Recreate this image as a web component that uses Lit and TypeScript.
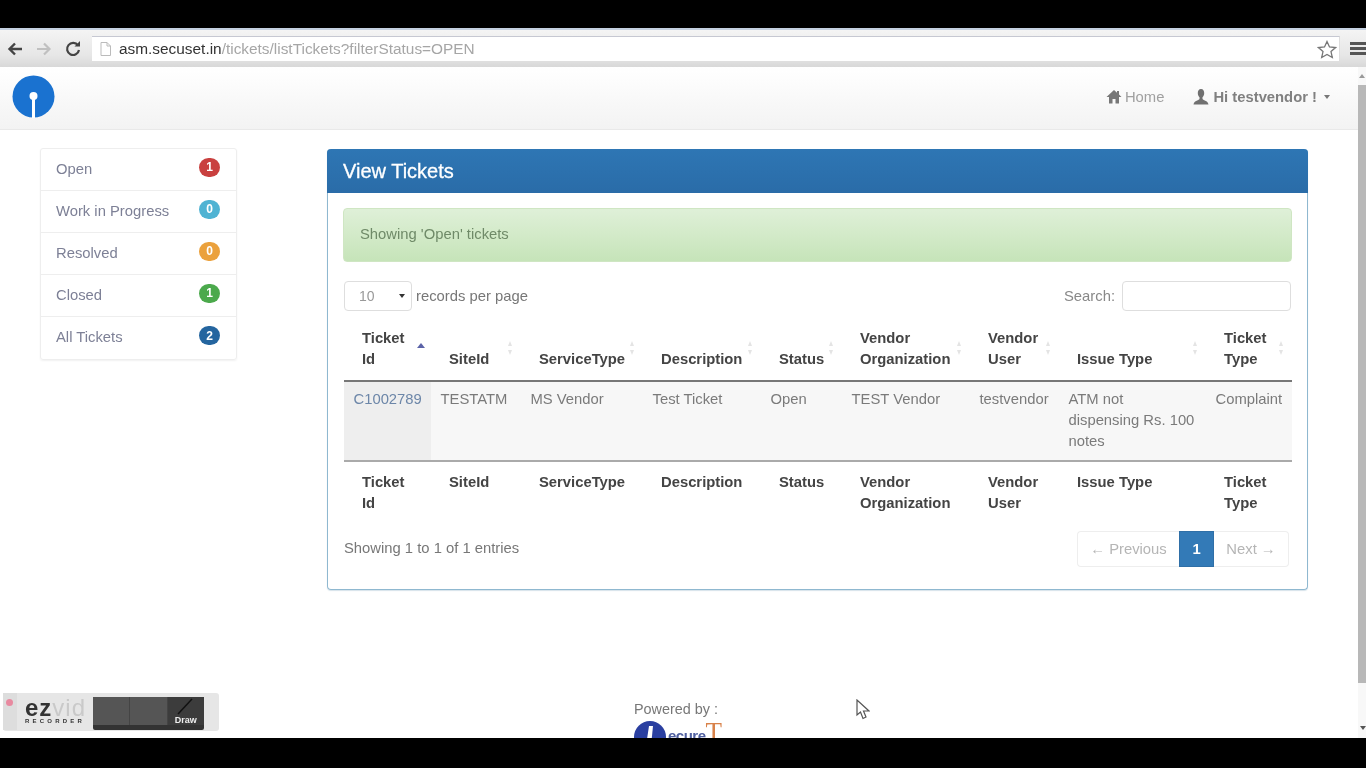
import { LitElement, css, html, svg } from 'lit';
import { customElement } from 'lit/decorators.js';

const sideItems = [
  { label: 'Open', count: 1, color: '#c9403f' },
  { label: 'Work in Progress', count: 0, color: '#4fb3d3' },
  { label: 'Resolved', count: 0, color: '#eba13c' },
  { label: 'Closed', count: 1, color: '#4ba94c' },
  { label: 'All Tickets', count: 2, color: '#24659f' },
];

const columns = [
  { width: 87, head: ['Ticket', 'Id'], sorted: true },
  { width: 90, head: ['SiteId'] },
  { width: 122, head: ['ServiceType'] },
  { width: 118, head: ['Description'] },
  { width: 81, head: ['Status'] },
  { width: 128, head: ['Vendor', 'Organization'] },
  { width: 89, head: ['Vendor', 'User'] },
  { width: 147, head: ['Issue Type'] },
  { width: 86, head: ['Ticket', 'Type'] },
];

const row = [
  ['TESTATM'],
  ['MS Vendor'],
  ['Test Ticket'],
  ['Open'],
  ['TEST Vendor'],
  ['testvendor'],
  ['ATM not', 'dispensing Rs. 100', 'notes'],
  ['Complaint'],
];

const sortIcon = (sorted: boolean) => html`
  <svg class="sort ${sorted ? 'on' : ''}" width="8" height="16" viewBox="0 0 8 16">
    ${sorted
      ? svg`<path d="M0 7 L4 2 L8 7 Z" fill="#5b63a8"/>`
      : svg`<path d="M2 6 L4 1 L6 6 Z M2 10 L4 15 L6 10 Z" fill="#e4e4e4"/>`}
  </svg>`;

@customElement('app-root')
export class AppRoot extends LitElement {
  static styles = css`
    :host {
      display: block;
      font-family: 'Liberation Sans', Arial, sans-serif;
      font-size: 14.8px;
      color: #666;
    }
    * { box-sizing: border-box; }
    .screen {
      position: relative;
      width: 1366px;
      height: 768px;
      background: #000;
      overflow: hidden;
      display: flex;
      flex-direction: column;
      padding-top: 28px;
      padding-bottom: 30px;
      filter: blur(0.6px);
    }
    .chrome {
      height: 39px;
      flex: none;
      display: flex;
      align-items: center;
      background: linear-gradient(#f4f4f4, #e6e6e6 70%, #d8d8d8);
      border-top: 2px solid #c4d0e0;
    }
    .nav-btn { width: 29px; height: 20px; flex: none; display: flex; align-items: center; justify-content: center; }
    .omni {
      margin-left: 5px;
      width: 1248px;
      height: 25px;
      background: #fff;
      border-top: 1px solid #c6c8d2;
      border-right: 1px solid #ddd;
      display: flex;
      align-items: center;
      padding: 0 2px 0 8px;
      font-size: 15.4px;
      color: #a6a6a6;
      gap: 8px;
      white-space: nowrap;
    }
    .omni b { font-weight: 400; color: #333; }
    .omni .star { margin-left: auto; }
    .menu { margin-left: 10px; width: 16px; flex: none; display: flex; flex-direction: column; gap: 2px; }
    .menu i { display: block; height: 3px; background: #555; }
    .page {
      flex: 1;
      min-height: 0;
      background: #fff;
      display: flex;
      flex-direction: column;
      margin-right: 8px;
      position: relative;
    }
    .navbar {
      height: 63px;
      flex: none;
      display: flex;
      align-items: center;
      padding: 0 28px 3px 12px;
      background: linear-gradient(#fff, #f3f3f3);
      border-bottom: 1px solid #e9e9e9;
    }
    .nav-links { margin-left: auto; display: flex; align-items: center; color: #a0a0a0; }
    .nav-home { display: flex; align-items: center; gap: 3px; margin-right: 29px; }
    .nav-user { display: flex; align-items: center; gap: 4px; font-weight: 700; color: #808080; }
    .caret { width: 0; height: 0; border: 3px solid transparent; border-top: 4px solid #777; border-bottom: 0; margin-left: 3px; }
    .main { flex: 1; min-height: 0; display: flex; align-items: flex-start; padding: 18px 0 0 40px; }
    .side {
      width: 197px;
      flex: none;
      margin-right: 90px;
      border: 1px solid #eee;
      border-radius: 3px;
      box-shadow: 0 1px 2px rgba(0, 0, 0, 0.06);
      color: #7d8096;
    }
    .side-item {
      height: 42px;
      display: flex;
      align-items: center;
      justify-content: space-between;
      padding: 0 16px 2px 15px;
      border-bottom: 1px solid #eee;
    }
    .side-item:last-child { border-bottom: 0; }
    .badge {
      width: 21px;
      height: 19px;
      border-radius: 10px;
      color: #fff;
      font-size: 12px;
      font-weight: 700;
      display: flex;
      align-items: center;
      justify-content: center;
      margin-top: -3px;
    }
    .panel {
      width: 981px;
      flex: none;
      margin-top: 1px;
      border: 1px solid #8fb8d0;
      border-top: 0;
      border-radius: 4px;
      box-shadow: 0 1px 1px rgba(90, 140, 170, 0.25);
    }
    .panel-head {
      height: 44px;
      margin: 0 -1px;
      padding-left: 16px;
      display: flex;
      align-items: center;
      background: linear-gradient(#2e76b4, #2a6ca8);
      color: #fff;
      font-size: 20px;
      font-weight: 400;
      -webkit-text-stroke: 0.3px #fff;
      border-radius: 4px 4px 0 0;
    }
    .panel-body { padding: 15px 15px 22px; }
    .alert {
      height: 54px;
      display: flex;
      align-items: center;
      padding: 0 16px 2px;
      background: linear-gradient(#dff0d8, #c6e4b9);
      border: 1px solid #cfe6c3;
      border-radius: 4px;
      color: #6f8a68;
    }
    .tools { display: flex; align-items: center; justify-content: space-between; margin: 19px 0 0 1px; height: 30px; }
    .length { display: flex; align-items: center; gap: 4px; color: #777; }
    .select {
      width: 68px;
      height: 30px;
      border: 1px solid #dedede;
      border-radius: 4px;
      padding: 0 6px 0 14px;
      display: flex;
      align-items: center;
      justify-content: space-between;
      font-size: 14px;
      color: #999;
    }
    .select i { width: 0; height: 0; border: 3px solid transparent; border-top: 4px solid #333; border-bottom: 0; }
    .search { display: flex; align-items: center; gap: 7px; color: #888; }
    .input { width: 169px; height: 30px; border: 1px solid #dedede; border-radius: 4px; margin-right: 1px; }
    table { width: 948px; table-layout: fixed; border-collapse: collapse; margin: 9px 0 0 1px; line-height: 21px; }
    th { position: relative; text-align: left; font-weight: 700; color: #444; vertical-align: bottom; padding: 8px 0 10px 18px; white-space: nowrap; }
    td { vertical-align: top; padding: 7px 0 8px 9.5px; color: #7a7a7a; background: #f7f7f7; white-space: nowrap; }
    td.first { background: #eeeeee; color: #6c86a8; }
    thead th { border-bottom: 2px solid #777; }
    tbody td { border-bottom: 2px solid #aaa; }
    tfoot th { vertical-align: top; padding: 10px 0 8px 18px; }
    .sort { position: absolute; right: 7px; top: 20px; }
    .sort.on { top: 21px; right: 6px; }
    .foot { display: flex; align-items: flex-start; justify-content: space-between; margin: 9px 0 0 1px; }
    .info { margin-top: 9px; color: #777; }
    .pager { display: flex; height: 36px; margin-right: 3px; color: #b5b5b5; }
    .pager span { display: flex; align-items: center; justify-content: center; border: 1px solid #eee; }
    .prev { width: 102px; border-radius: 4px 0 0 4px; border-right: 0 !important; }
    .cur { width: 35px; background: #337ab7; border-color: #2f6fa7 !important; color: #fff; font-weight: 700; }
    .next { width: 75px; border-radius: 0 4px 4px 0; border-left: 0 !important; }
    .powered { position: absolute; left: 634px; top: 633px; width: 110px; color: #777; font-size: 14.4px; line-height: 18px; }
    .logo2 { display: flex; align-items: flex-start; margin-top: 2px; height: 18px; overflow: hidden; }
    .logo2 em { font-style: normal; font-size: 15px; line-height: 32px; color: #5060a0; font-weight: 700; letter-spacing: -0.5px; white-space: nowrap; }
    .logo2 em u { text-decoration: none; color: #d8824a; font-family: 'Liberation Serif', serif; font-size: 27px; font-weight: 400; line-height: 20px; }
    .scroll {
      position: absolute;
      right: 0;
      top: 67px;
      bottom: 30px;
      width: 8px;
      background: #f8f8f8;
      display: flex;
      flex-direction: column;
      padding-top: 18px;
      padding-bottom: 55px;
    }
    .scroll i { flex: 1; background: #b8b8b8; }
    .scroll::before {
      content: '';
      position: absolute;
      left: 1px;
      top: 7px;
      border: 3px solid transparent;
      border-bottom: 4px solid #999;
      border-top: 0;
    }
    .scroll::after {
      content: '';
      position: absolute;
      left: 2px;
      bottom: 8px;
      border: 3px solid transparent;
      border-top: 4px solid #555;
      border-bottom: 0;
    }
    .ezvid {
      position: absolute;
      left: 3px;
      top: 693px;
      width: 216px;
      height: 38px;
      background: #e6e6e6;
      border-radius: 3px;
      display: flex;
      align-items: stretch;
      padding: 4px 15px 1px 0;
    }
    .ez-rec { width: 14px; margin-top: -4px; background: #ddd; position: relative; flex: none; }
    .ez-rec i { position: absolute; left: 3px; top: 6px; width: 7px; height: 7px; border-radius: 50%; background: #e88aa0; }
    .ez-logo { width: 76px; flex: none; padding-left: 8px; font-size: 24px; font-weight: 700; line-height: 22px; color: #333; white-space: nowrap; overflow: hidden; letter-spacing: 1px; }
    .ez-logo u { text-decoration: none; font-weight: 400; color: #c9c9c9; }
    .ez-logo small { display: block; font-size: 6px; line-height: 6px; margin-top: -1px; letter-spacing: 3.2px; color: #333; }
    .ez-btns { flex: 1; display: flex; background: #444; border-radius: 2px; border-bottom: 5px solid #333; }
    .ez-btns div { flex: 1; background: #555; margin-right: 1px; position: relative; color: #eee; font-size: 9px; font-weight: 700; display: flex; align-items: flex-end; justify-content: center; }
    .ez-btns div:last-child { background: #3c3c3c; margin-right: 0; }
    .pen { position: absolute; right: 10px; top: 1px; }
    .cursor { position: absolute; left: 856px; top: 699px; }
  `;

  render() {
    return html`
      <div class="screen">
        <div class="chrome">
          <div class="nav-btn">
            <svg width="16" height="14" viewBox="0 0 16 14"><path d="M15 7H3M8 1.500 2.500 7 8 12.500" fill="none" stroke="#444" stroke-width="2.400"/></svg>
          </div>
          <div class="nav-btn">
            <svg width="16" height="14" viewBox="0 0 16 14"><path d="M1 7H13M8 1.500 13.500 7 8 12.500" fill="none" stroke="#c0c0c0" stroke-width="2.200"/></svg>
          </div>
          <div class="nav-btn">
            <svg width="16" height="16" viewBox="0 0 16 16"><path d="M13 4.500A6 6 0 1 0 14 9" fill="none" stroke="#444" stroke-width="2.200"/><path d="M9.500 5.500H15V0Z" fill="#444"/></svg>
          </div>
          <div class="omni">
            <svg width="11" height="14" viewBox="0 0 11 14"><path d="M1 .5H7L10.500 4V13.500H1ZM7 .5V4H10.500" fill="#fff" stroke="#bbb"/></svg>
            <span><b>asm.secuset.in</b>/tickets/listTickets?filterStatus=OPEN</span>
            <svg class="star" width="20" height="19" viewBox="0 0 20 19"><path d="M10 1.500 12.500 7 18.500 7.600 14 11.600 15.300 17.500 10 14.500 4.700 17.500 6 11.600 1.500 7.600 7.500 7Z" fill="#fff" stroke="#777" stroke-width="1.300"/></svg>
          </div>
          <div class="menu"><i></i><i></i><i></i></div>
        </div>
        <div class="page">
          <div class="navbar">
            <svg width="43" height="43" viewBox="0 0 43 43">
              <circle cx="21.500" cy="21.500" r="21" fill="#1a72d0"/>
              <circle cx="21.500" cy="21" r="4" fill="#fff"/>
              <rect x="20" y="22" width="3" height="21" fill="#fff"/>
            </svg>
            <div class="nav-links">
              <span class="nav-home">
                <svg width="16" height="15" viewBox="0 0 16 15"><path d="M8 1 0.500 8H3V14.500H6.500V10H9.500V14.500H13V8H15.500L13 5.600V2H11V3.800Z" fill="#777"/></svg>
                Home
              </span>
              <span class="nav-user">
                <svg width="16" height="16" viewBox="0 0 16 16"><path d="M8 0C5.800 0 4.800 1.800 4.800 4 4.800 6 5.600 7.500 6.500 8.300V10C6.500 11 1 11.500 .5 15.500H15.500C15 11.500 9.500 11 9.500 10V8.300C10.400 7.500 11.200 6 11.200 4 11.200 1.800 10.200 0 8 0Z" fill="#707070"/></svg>
                Hi testvendor !
                <i class="caret"></i>
              </span>
            </div>
          </div>
          <div class="main">
            <div class="side">
              ${sideItems.map(
                (s) => html`<div class="side-item">
                  <span>${s.label}</span>
                  <span class="badge" style="background:${s.color}">${s.count}</span>
                </div>`,
              )}
            </div>
            <div class="panel">
              <div class="panel-head">View Tickets</div>
              <div class="panel-body">
                <div class="alert">Showing 'Open' tickets</div>
                <div class="tools">
                  <div class="length">
                    <div class="select">10<i></i></div>
                    records per page
                  </div>
                  <div class="search">Search: <div class="input"></div></div>
                </div>
                <table>
                  <colgroup>
                    ${columns.map((c) => html`<col style="width:${c.width}px" />`)}
                  </colgroup>
                  <thead>
                    <tr>
                      ${columns.map(
                        (c) => html`<th>${c.head[0]}${c.head[1] ? html`<br />${c.head[1]}` : ''}${sortIcon(!!c.sorted)}</th>`,
                      )}
                    </tr>
                  </thead>
                  <tbody>
                    <tr>
                      <td class="first">C1002789</td>
                      ${row.map((lines) => html`<td>${lines.map((l, i) => html`${i ? html`<br />` : ''}${l}`)}</td>`)}
                    </tr>
                  </tbody>
                  <tfoot>
                    <tr>
                      ${columns.map((c) => html`<th>${c.head[0]}${c.head[1] ? html`<br />${c.head[1]}` : ''}</th>`)}
                    </tr>
                  </tfoot>
                </table>
                <div class="foot">
                  <div class="info">Showing 1 to 1 of 1 entries</div>
                  <div class="pager">
                    <span class="prev">← Previous</span>
                    <span class="cur">1</span>
                    <span class="next">Next →</span>
                  </div>
                </div>
              </div>
            </div>
          </div>
          <div class="powered">
            Powered by :
            <div class="logo2">
              <svg width="34" height="30" viewBox="0 0 34 30"><circle cx="16" cy="17" r="16" fill="#2a3fa0"/><path d="M15 6 19 6 17 26 12 26Z" fill="#fff"/></svg>
              <em>ecure<u>T</u></em>
            </div>
          </div>
        </div>
        <div class="scroll"><i></i></div>
        <div class="ezvid">
          <div class="ez-rec"><i></i></div>
          <div class="ez-logo">ez<u>vid</u><small>RECORDER</small></div>
          <div class="ez-btns">
            <div></div>
            <div></div>
            <div>
              <svg class="pen" width="18" height="18" viewBox="0 0 18 18"><path d="M16 1 2 16" stroke="#111" stroke-width="1.500"/></svg>
              Draw
            </div>
          </div>
        </div>
        <svg class="cursor" width="14" height="21" viewBox="0 0 14 21"><path d="M1 1V16L4.500 13 7 19.500 10 18 7.500 12H13Z" fill="#fff" stroke="#555" stroke-width="1.200"/></svg>
      </div>
    `;
  }
}
